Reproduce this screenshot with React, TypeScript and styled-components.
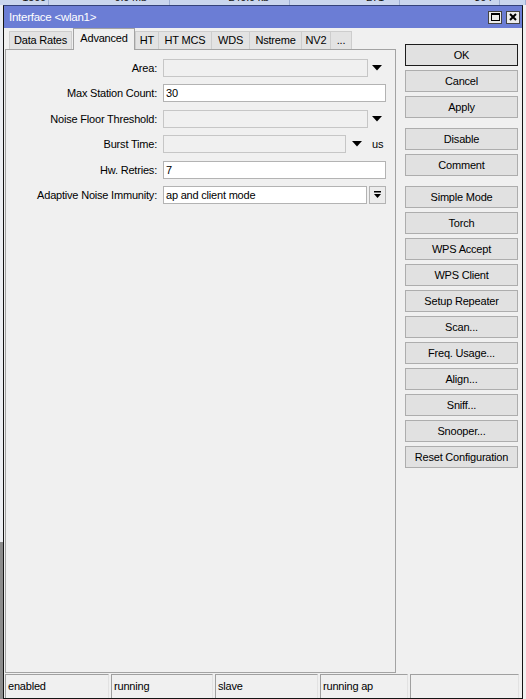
import React from "react";
import styled, { createGlobalStyle } from "styled-components";

const Global = createGlobalStyle`
  html, body { margin: 0; padding: 0; }
  body {
    width: 526px;
    height: 699px;
    overflow: hidden;
    font-family: "Liberation Sans", Arial, sans-serif;
    font-size: 11px;
    letter-spacing: -0.2px;
    color: #000;
    background:
      linear-gradient(to bottom, #eceef2 0, #eceef2 542px, #8c8c8c 542px, #8c8c8c 100%) left top / 3px 100% no-repeat,
      #f1f1f1;
  }
`;

const BehindStrip = styled.div`
  height: 5px;
  overflow: hidden;
  display: flex;
  background: #cad6ee;
`;

const BehindCell = styled.div<{ $w: number; $pr: number }>`
  width: ${(p) => p.$w}px;
  flex: none;
  box-sizing: border-box;
  text-align: right;
  padding-right: ${(p) => p.$pr}px;
  border-right: 1px solid #9fb0d4;
  line-height: 13px;
  margin-top: -9px;
  color: #111;
`;

const Window = styled.div`
  margin-left: 3px;
  width: 520px;
  height: 694px;
  box-sizing: border-box;
  border: 1px solid #141414;
  border-top-color: #34427a;
  background: #f0f0f0;
  display: flex;
  flex-direction: column;
`;

const TitleBar = styled.div`
  height: 22px;
  flex: none;
  background: #6b7dd5;
  display: flex;
  align-items: center;
  padding: 0 2px 0 5px;
`;

const TitleText = styled.div`
  flex: 1;
  color: #fff;
  font-size: 11.5px;
  letter-spacing: -0.25px;
  padding-bottom: 1px;
`;

const TitleBtn = styled.div`
  width: 14px;
  height: 13px;
  box-sizing: border-box;
  border: 1px solid #444;
  background: #ececec;
  margin-left: 4px;
  display: flex;
  align-items: center;
  justify-content: center;
`;

const Body = styled.div`
  flex: 1;
  display: flex;
  min-height: 0;
`;

const LeftCol = styled.div`
  margin-left: 1px;
  width: 391px;
  display: flex;
  flex-direction: column;
`;

const TabRow = styled.div`
  height: 21px;
  flex: none;
  display: flex;
  align-items: flex-end;
  padding-left: 4px;
`;

const Tab = styled.div<{ $w: number; $active?: boolean }>`
  width: ${(p) => p.$w}px;
  flex: none;
  box-sizing: border-box;
  display: flex;
  align-items: center;
  justify-content: center;
  white-space: nowrap;
  ${(p) =>
    p.$active
      ? `
    height: 22px;
    margin: 0 0 -1px 2px;
    padding-bottom: 3px;
    background: #f0f0f0;
    border: 1px solid #a3a3a3;
    border-bottom: none;
    position: relative;
    z-index: 1;
  `
      : `
    height: 18px;
    background: #e3e3e3;
    border: 1px solid #cdcdcd;
    border-bottom: none;
    margin-right: -1px;
    padding-bottom: 1px;
  `}
`;

const Panel = styled.div`
  height: 624px;
  flex: none;
  box-sizing: border-box;
  border: 1px solid #a3a3a3;
  background: #f0f0f0;
  padding: 9px 0 0 0;
`;

const Form = styled.div`
  display: grid;
  grid-template-columns: 151px 223px;
  column-gap: 6px;
  row-gap: 7.4px;
  grid-auto-rows: 18px;
`;

const Label = styled.div`
  text-align: right;
  line-height: 18px;
  white-space: nowrap;
`;

const Field = styled.div`
  display: flex;
  align-items: stretch;
`;

const Input = styled.div<{ $w?: number; $disabled?: boolean }>`
  ${(p) => (p.$w ? `width: ${p.$w}px; flex: none;` : "flex: 1;")}
  box-sizing: border-box;
  height: 18px;
  border: 1px solid ${(p) => (p.$disabled ? "#c6c6c6" : "#b3b3b3")};
  background: ${(p) => (p.$disabled ? "#f0f0f0" : "#ffffff")};
  padding-left: 2px;
  line-height: 16px;
  white-space: nowrap;
  overflow: hidden;
`;

const ArrowCell = styled.div<{ $w: number }>`
  width: ${(p) => p.$w}px;
  flex: none;
  display: flex;
  align-items: center;
  justify-content: center;
`;

const Unit = styled.div`
  flex: 1;
  line-height: 18px;
  padding-left: 4px;
`;

const SmallBtn = styled.div`
  width: 17px;
  flex: none;
  margin-left: 2px;
  box-sizing: border-box;
  border: 1px solid #b3b3b3;
  background: #ececec;
  display: flex;
  align-items: center;
  justify-content: center;
`;

const RightCol = styled.div`
  margin-left: 9px;
  width: 113px;
  padding-top: 16px;
  display: flex;
  flex-direction: column;
`;

const BtnGroup = styled.div`
  display: flex;
  flex-direction: column;
  gap: 4px;
  & + & { margin-top: 10px; }
`;

const Button = styled.div<{ $default?: boolean }>`
  height: 22px;
  box-sizing: border-box;
  border: 1px solid ${(p) => (p.$default ? "#1c1c1c" : "#adadad")};
  background: #e1e1e1;
  display: flex;
  align-items: center;
  justify-content: center;
  white-space: nowrap;
  padding-bottom: 1px;
`;

const StatusBar = styled.div`
  height: 24px;
  margin-top: 1px;
  flex: none;
  display: flex;
  gap: 2px;
  padding-left: 1px;
`;

const StatusField = styled.div<{ $w: number }>`
  width: ${(p) => p.$w}px;
  flex: none;
  box-sizing: border-box;
  border-top: 1px solid #a0a0a0;
  border-left: 1px solid #a0a0a0;
  border-right: 1px solid #e2e2e2;
  padding: 4px 0 0 2px;
  line-height: 14px;
  white-space: nowrap;
`;

const DownArrow = () => (
  <svg width="10" height="6" viewBox="0 0 10 6">
    <polygon points="0,0 10,0 5,5.5" fill="#000" />
  </svg>
);

const BarArrow = () => (
  <svg width="9" height="9" viewBox="0 0 9 9">
    <rect x="1" y="1" width="7" height="1.5" fill="#000" />
    <polygon points="1,4 8,4 4.5,8" fill="#000" />
  </svg>
);

const MaxIcon = () => (
  <svg width="9" height="8" viewBox="0 0 9 8">
    <rect x="0.5" y="0.5" width="8" height="7" fill="none" stroke="#000" strokeWidth="1" />
    <rect x="0" y="0" width="9" height="2" fill="#000" />
  </svg>
);

const CloseIcon = () => (
  <svg width="8" height="8" viewBox="0 0 8 8">
    <path d="M1 1 L7 7 M7 1 L1 7" stroke="#000" strokeWidth="2" />
  </svg>
);

const tabs = [
  { label: "Data Rates", w: 63 },
  { label: "Advanced", w: 62, active: true },
  { label: "HT", w: 24 },
  { label: "HT MCS", w: 54 },
  { label: "WDS", w: 39 },
  { label: "Nstreme", w: 53 },
  { label: "NV2", w: 30 },
  { label: "...", w: 22 },
];

const buttonGroups = [
  ["OK", "Cancel", "Apply"],
  ["Disable", "Comment"],
  [
    "Simple Mode",
    "Torch",
    "WPS Accept",
    "WPS Client",
    "Setup Repeater",
    "Scan...",
    "Freq. Usage...",
    "Align...",
    "Sniff...",
    "Snooper...",
    "Reset Configuration",
  ],
];

const status = [
  { t: "enabled", w: 104 },
  { t: "running", w: 102 },
  { t: "slave", w: 103 },
  { t: "running ap", w: 88 },
  { t: "", w: 109 },
];

const behind = [
  { t: "1500", w: 49, pr: 2 },
  { t: "0.0 Mb", w: 121, pr: 22 },
  { t: "240.0 kb", w: 120, pr: 20 },
  { t: "271", w: 110, pr: 15 },
  { t: "304", w: 100, pr: 7 },
  { t: "", w: 26, pr: 0 },
];

export default function App() {
  return (
    <>
      <Global />
      <BehindStrip>
        {behind.map((c, i) => (
          <BehindCell key={i} $w={c.w} $pr={c.pr}>
            {c.t}
          </BehindCell>
        ))}
      </BehindStrip>
      <Window>
        <TitleBar>
          <TitleText>Interface &lt;wlan1&gt;</TitleText>
          <TitleBtn>
            <MaxIcon />
          </TitleBtn>
          <TitleBtn>
            <CloseIcon />
          </TitleBtn>
        </TitleBar>
        <Body>
          <LeftCol>
            <TabRow>
              {tabs.map((t) => (
                <Tab key={t.label} $w={t.w} $active={t.active}>
                  {t.label}
                </Tab>
              ))}
            </TabRow>
            <Panel>
              <Form>
                <Label>Area:</Label>
                <Field>
                  <Input $w={205} $disabled />
                  <ArrowCell $w={18}>
                    <DownArrow />
                  </ArrowCell>
                </Field>

                <Label>Max Station Count:</Label>
                <Field>
                  <Input>30</Input>
                </Field>

                <Label>Noise Floor Threshold:</Label>
                <Field>
                  <Input $w={205} $disabled />
                  <ArrowCell $w={18}>
                    <DownArrow />
                  </ArrowCell>
                </Field>

                <Label>Burst Time:</Label>
                <Field>
                  <Input $w={183} $disabled />
                  <ArrowCell $w={22}>
                    <DownArrow />
                  </ArrowCell>
                  <Unit>us</Unit>
                </Field>

                <Label>Hw. Retries:</Label>
                <Field>
                  <Input>7</Input>
                </Field>

                <Label>Adaptive Noise Immunity:</Label>
                <Field>
                  <Input>ap and client mode</Input>
                  <SmallBtn>
                    <BarArrow />
                  </SmallBtn>
                </Field>
              </Form>
            </Panel>
          </LeftCol>
          <RightCol>
            {buttonGroups.map((g, gi) => (
              <BtnGroup key={gi}>
                {g.map((b) => (
                  <Button key={b} $default={b === "OK"}>
                    {b}
                  </Button>
                ))}
              </BtnGroup>
            ))}
          </RightCol>
        </Body>
        <StatusBar>
          {status.map((s, i) => (
            <StatusField key={i} $w={s.w}>
              {s.t}
            </StatusField>
          ))}
        </StatusBar>
      </Window>
    </>
  );
}
